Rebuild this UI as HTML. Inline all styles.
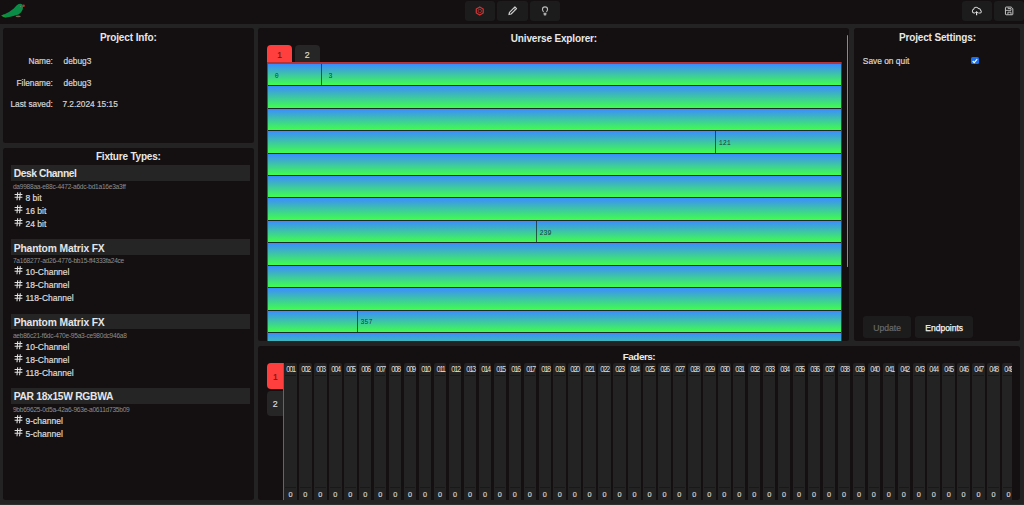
<!DOCTYPE html>
<html><head><meta charset="utf-8"><style>
html,body{margin:0;padding:0;width:1024px;height:505px;overflow:hidden;background:#141011;}
body{position:relative;font-family:'Liberation Sans', sans-serif;}
div,svg{position:absolute;}
.t{line-height:1;white-space:nowrap;}
</style></head><body>
<div style="left:0.00px;top:0.00px;width:1024.00px;height:23.80px;background:#141011;"></div>
<svg style="left:0;top:0" width="28" height="22" viewBox="0 0 28 22">
<path d="M1.3 15.3 L4 14.4 L9 12 L13.5 8.8 L16.5 5.6 L18.6 4 L20.8 3.7 L22.4 4.6 L23 6.5 L22.8 9.2 L21.2 12.2 L18.5 14.4 L15 15.6 L10.5 16.7 L6.2 17.6 L3.5 16.9 Z" fill="#0b8c46"/>
<path d="M1.3 15.3 L4.5 14.6 L6 17.4 L3.3 16.9 Z" fill="#139a2a"/>
<circle cx="23.6" cy="5.8" r="1.2" fill="#e02424"/>
<ellipse cx="18.2" cy="16.4" rx="2.6" ry="0.8" fill="#7a6656"/>
<circle cx="20.5" cy="6.4" r="0.5" fill="#6a8a7a"/>
</svg>
<div style="left:464.50px;top:1.10px;width:30.70px;height:19.90px;background:#1c1c1c;border-radius:3px;"></div>
<div style="left:497.00px;top:1.10px;width:30.60px;height:19.90px;background:#1c1c1c;border-radius:3px;"></div>
<div style="left:529.50px;top:1.10px;width:30.20px;height:19.90px;background:#1c1c1c;border-radius:3px;"></div>
<div style="left:961.50px;top:1.10px;width:30.20px;height:19.90px;background:#1c1c1c;border-radius:3px;"></div>
<div style="left:993.50px;top:1.10px;width:30.20px;height:19.90px;background:#1c1c1c;border-radius:3px;"></div>
<svg style="left:470px;top:1px" width="20" height="20" viewBox="0 0 20 20">
<path d="M9.75 6.00 L13.21 8.00 L13.21 12.00 L9.75 14.00 L6.29 12.00 L6.29 8.00 Z" fill="none" stroke="#cc3636" stroke-width="1.25" stroke-linejoin="round"/>
<circle cx="9.75" cy="10.0" r="1.75" fill="none" stroke="#a83030" stroke-width="0.9"/>
</svg>
<svg style="left:502px;top:1px" width="20" height="20" viewBox="0 0 20 20">
<path d="M6.94 13.56 L7.47 11.41 L12.91 5.96 L14.54 7.59 L9.09 13.03 Z" fill="none" stroke="#cfcfcf" stroke-width="1.15" stroke-linejoin="round"/>
<path d="M11.71 7.17 L13.33 8.79" stroke="#cfcfcf" stroke-width="0.9"/>
</svg>
<svg style="left:535px;top:1px" width="20" height="20" viewBox="0 0 20 20">
<path d="M8.6 10.9 Q7.45 9.8 7.45 8.35 A2.55 2.55 0 0 1 12.55 8.35 Q12.55 9.8 11.4 10.9" fill="none" stroke="#b8b8b8" stroke-width="1.15"/>
<path d="M8.45 11.8 L11.55 11.8 L11.2 14.3 Q10 14.8 8.8 14.3 Z" fill="#adadad"/>
</svg>
<svg style="left:966px;top:1px" width="22" height="20" viewBox="0 0 22 20">
<path d="M9.0 11.9 L8.1 11.9 A1.85 1.85 0 0 1 7.6 8.3 A2.6 2.6 0 0 1 12.4 7.6 A1.8 1.8 0 0 1 14.6 9.6 A1.2 1.2 0 0 1 14.2 11.9 L12.3 11.9" fill="none" stroke="#d0d0d0" stroke-width="1.05" stroke-linejoin="round"/>
<path d="M10.6 14.3 L10.6 11" stroke="#e6e6e6" stroke-width="1.2"/>
<path d="M8.9 12.0 L10.6 10.1 L12.3 12.0 Z" fill="#e6e6e6"/>
</svg>
<svg style="left:998px;top:1px" width="22" height="20" viewBox="0 0 22 20">
<path d="M8.2 6.05 L13.2 6.05 L14.85 7.7 L14.85 13.1 Q14.85 13.75 14.2 13.75 L8.1 13.75 Q7.45 13.75 7.45 13.1 L7.45 6.8 Q7.45 6.05 8.2 6.05 Z" fill="none" stroke="#cccccc" stroke-width="0.95" stroke-linejoin="round"/>
<path d="M10.1 6.5 L10.1 7.55 L13.0 7.55 L13.0 9.35 L7.6 9.35" fill="none" stroke="#c4c4c4" stroke-width="0.9"/>
<path d="M9.9 13.5 L9.9 11.2 L13.0 11.2 L13.0 13.5" fill="none" stroke="#c4c4c4" stroke-width="0.9"/>
</svg>
<div style="left:0.00px;top:23.80px;width:1024.00px;height:481.20px;background:#232323;"></div>
<div style="left:3.00px;top:28.00px;width:251.00px;height:114.50px;background:#141011;border-radius:2.5px;"></div>
<div style="left:3.00px;top:147.70px;width:251.00px;height:352.00px;background:#141011;border-radius:2.5px;"></div>
<div style="left:258.00px;top:28.00px;width:591.00px;height:313.30px;background:#141011;border-radius:2.5px;"></div>
<div style="left:854.00px;top:28.00px;width:166.00px;height:313.30px;background:#141011;border-radius:2.5px;"></div>
<div style="left:258.00px;top:345.90px;width:762.00px;height:154.00px;background:#141011;border-radius:2.5px;"></div>
<div style="left:0.00px;top:503.60px;width:1024.00px;height:1.40px;background:#2e2e2e;"></div>
<div class="t" style="left:28.30px;width:200px;text-align:center;top:33.13px;font-size:10px;color:#e8e8e8;font-weight:bold;font-family:'Liberation Sans', sans-serif;letter-spacing:-0.12px;">Project Info:</div>
<div class="t" style="left:-147.10px;width:200px;text-align:right;top:57.47px;font-size:8.3px;color:#d4d4d4;font-weight:normal;font-family:'Liberation Sans', sans-serif;-webkit-text-stroke:0.2px #d4d4d4;">Name:</div>
<div class="t" style="left:63.60px;top:57.47px;font-size:8.3px;color:#d4d4d4;font-weight:normal;font-family:'Liberation Sans', sans-serif;-webkit-text-stroke:0.2px #d4d4d4;">debug3</div>
<div class="t" style="left:-147.10px;width:200px;text-align:right;top:78.87px;font-size:8.3px;color:#d4d4d4;font-weight:normal;font-family:'Liberation Sans', sans-serif;-webkit-text-stroke:0.2px #d4d4d4;">Filename:</div>
<div class="t" style="left:63.60px;top:78.87px;font-size:8.3px;color:#d4d4d4;font-weight:normal;font-family:'Liberation Sans', sans-serif;-webkit-text-stroke:0.2px #d4d4d4;">debug3</div>
<div class="t" style="left:-147.10px;width:200px;text-align:right;top:99.77px;font-size:8.3px;color:#d4d4d4;font-weight:normal;font-family:'Liberation Sans', sans-serif;-webkit-text-stroke:0.2px #d4d4d4;">Last saved:</div>
<div class="t" style="left:62.40px;top:99.77px;font-size:8.3px;color:#d4d4d4;font-weight:normal;font-family:'Liberation Sans', sans-serif;-webkit-text-stroke:0.2px #d4d4d4;">7.2.2024 15:15</div>
<div class="t" style="left:28.30px;width:200px;text-align:center;top:151.53px;font-size:10px;color:#e8e8e8;font-weight:bold;font-family:'Liberation Sans', sans-serif;letter-spacing:-0.2px;">Fixture Types:</div>
<div style="left:11.10px;top:165.00px;width:238.90px;height:15.90px;background:#252525;"></div>
<div class="t" style="left:13.70px;top:169.28px;font-size:10.3px;color:#e6e6e6;font-weight:bold;font-family:'Liberation Sans', sans-serif;letter-spacing:-0.44px;">Desk Channel</div>
<div class="t" style="left:12.90px;top:183.91px;font-size:6.6px;color:#8e8e8e;font-weight:normal;font-family:'Liberation Sans', sans-serif;-webkit-text-stroke:0;letter-spacing:-0.25px;">da9988aa-e88c-4472-a6dc-bd1a16e3a3ff</div>
<svg style="left:13.5px;top:191.10px" width="9" height="10" viewBox="0 0 9 10"><path d="M0.6 3.5 H8.4 M0.6 6.3 H8.4 M3.7 1.2 L3.0 9.2 M6.3 1.2 L5.6 9.2" stroke="#e2e2e2" stroke-width="1.05" fill="none"/></svg>
<div class="t" style="left:25.50px;top:193.90px;font-size:8.5px;color:#dcdcdc;font-weight:normal;font-family:'Liberation Sans', sans-serif;-webkit-text-stroke:0.2px #dcdcdc;">8 bit</div>
<svg style="left:13.5px;top:204.20px" width="9" height="10" viewBox="0 0 9 10"><path d="M0.6 3.5 H8.4 M0.6 6.3 H8.4 M3.7 1.2 L3.0 9.2 M6.3 1.2 L5.6 9.2" stroke="#e2e2e2" stroke-width="1.05" fill="none"/></svg>
<div class="t" style="left:25.50px;top:207.00px;font-size:8.5px;color:#dcdcdc;font-weight:normal;font-family:'Liberation Sans', sans-serif;-webkit-text-stroke:0.2px #dcdcdc;">16 bit</div>
<svg style="left:13.5px;top:217.30px" width="9" height="10" viewBox="0 0 9 10"><path d="M0.6 3.5 H8.4 M0.6 6.3 H8.4 M3.7 1.2 L3.0 9.2 M6.3 1.2 L5.6 9.2" stroke="#e2e2e2" stroke-width="1.05" fill="none"/></svg>
<div class="t" style="left:25.50px;top:220.10px;font-size:8.5px;color:#dcdcdc;font-weight:normal;font-family:'Liberation Sans', sans-serif;-webkit-text-stroke:0.2px #dcdcdc;">24 bit</div>
<div style="left:11.10px;top:239.30px;width:238.90px;height:15.90px;background:#252525;"></div>
<div class="t" style="left:13.70px;top:243.58px;font-size:10.3px;color:#e6e6e6;font-weight:bold;font-family:'Liberation Sans', sans-serif;letter-spacing:-0.14px;">Phantom Matrix FX</div>
<div class="t" style="left:12.90px;top:258.21px;font-size:6.6px;color:#8e8e8e;font-weight:normal;font-family:'Liberation Sans', sans-serif;-webkit-text-stroke:0;letter-spacing:-0.25px;">7a168277-ad26-4776-bb15-ff4333fa24ce</div>
<svg style="left:13.5px;top:265.40px" width="9" height="10" viewBox="0 0 9 10"><path d="M0.6 3.5 H8.4 M0.6 6.3 H8.4 M3.7 1.2 L3.0 9.2 M6.3 1.2 L5.6 9.2" stroke="#e2e2e2" stroke-width="1.05" fill="none"/></svg>
<div class="t" style="left:25.50px;top:268.20px;font-size:8.5px;color:#dcdcdc;font-weight:normal;font-family:'Liberation Sans', sans-serif;-webkit-text-stroke:0.2px #dcdcdc;">10-Channel</div>
<svg style="left:13.5px;top:278.50px" width="9" height="10" viewBox="0 0 9 10"><path d="M0.6 3.5 H8.4 M0.6 6.3 H8.4 M3.7 1.2 L3.0 9.2 M6.3 1.2 L5.6 9.2" stroke="#e2e2e2" stroke-width="1.05" fill="none"/></svg>
<div class="t" style="left:25.50px;top:281.30px;font-size:8.5px;color:#dcdcdc;font-weight:normal;font-family:'Liberation Sans', sans-serif;-webkit-text-stroke:0.2px #dcdcdc;">18-Channel</div>
<svg style="left:13.5px;top:291.60px" width="9" height="10" viewBox="0 0 9 10"><path d="M0.6 3.5 H8.4 M0.6 6.3 H8.4 M3.7 1.2 L3.0 9.2 M6.3 1.2 L5.6 9.2" stroke="#e2e2e2" stroke-width="1.05" fill="none"/></svg>
<div class="t" style="left:25.50px;top:294.40px;font-size:8.5px;color:#dcdcdc;font-weight:normal;font-family:'Liberation Sans', sans-serif;-webkit-text-stroke:0.2px #dcdcdc;">118-Channel</div>
<div style="left:11.10px;top:313.60px;width:238.90px;height:15.90px;background:#252525;"></div>
<div class="t" style="left:13.70px;top:317.88px;font-size:10.3px;color:#e6e6e6;font-weight:bold;font-family:'Liberation Sans', sans-serif;letter-spacing:-0.14px;">Phantom Matrix FX</div>
<div class="t" style="left:12.90px;top:332.51px;font-size:6.6px;color:#8e8e8e;font-weight:normal;font-family:'Liberation Sans', sans-serif;-webkit-text-stroke:0;letter-spacing:-0.25px;">aeb86c21-f6dc-470e-95a3-ce980dc946a8</div>
<svg style="left:13.5px;top:339.70px" width="9" height="10" viewBox="0 0 9 10"><path d="M0.6 3.5 H8.4 M0.6 6.3 H8.4 M3.7 1.2 L3.0 9.2 M6.3 1.2 L5.6 9.2" stroke="#e2e2e2" stroke-width="1.05" fill="none"/></svg>
<div class="t" style="left:25.50px;top:342.50px;font-size:8.5px;color:#dcdcdc;font-weight:normal;font-family:'Liberation Sans', sans-serif;-webkit-text-stroke:0.2px #dcdcdc;">10-Channel</div>
<svg style="left:13.5px;top:352.80px" width="9" height="10" viewBox="0 0 9 10"><path d="M0.6 3.5 H8.4 M0.6 6.3 H8.4 M3.7 1.2 L3.0 9.2 M6.3 1.2 L5.6 9.2" stroke="#e2e2e2" stroke-width="1.05" fill="none"/></svg>
<div class="t" style="left:25.50px;top:355.60px;font-size:8.5px;color:#dcdcdc;font-weight:normal;font-family:'Liberation Sans', sans-serif;-webkit-text-stroke:0.2px #dcdcdc;">18-Channel</div>
<svg style="left:13.5px;top:365.90px" width="9" height="10" viewBox="0 0 9 10"><path d="M0.6 3.5 H8.4 M0.6 6.3 H8.4 M3.7 1.2 L3.0 9.2 M6.3 1.2 L5.6 9.2" stroke="#e2e2e2" stroke-width="1.05" fill="none"/></svg>
<div class="t" style="left:25.50px;top:368.70px;font-size:8.5px;color:#dcdcdc;font-weight:normal;font-family:'Liberation Sans', sans-serif;-webkit-text-stroke:0.2px #dcdcdc;">118-Channel</div>
<div style="left:11.10px;top:387.90px;width:238.90px;height:15.90px;background:#252525;"></div>
<div class="t" style="left:13.70px;top:392.18px;font-size:10.3px;color:#e6e6e6;font-weight:bold;font-family:'Liberation Sans', sans-serif;letter-spacing:-0.32px;">PAR 18x15W RGBWA</div>
<div class="t" style="left:12.90px;top:406.81px;font-size:6.6px;color:#8e8e8e;font-weight:normal;font-family:'Liberation Sans', sans-serif;-webkit-text-stroke:0;letter-spacing:-0.25px;">9bb69625-0d5a-42a6-963e-a0611d735b09</div>
<svg style="left:13.5px;top:414.00px" width="9" height="10" viewBox="0 0 9 10"><path d="M0.6 3.5 H8.4 M0.6 6.3 H8.4 M3.7 1.2 L3.0 9.2 M6.3 1.2 L5.6 9.2" stroke="#e2e2e2" stroke-width="1.05" fill="none"/></svg>
<div class="t" style="left:25.50px;top:416.80px;font-size:8.5px;color:#dcdcdc;font-weight:normal;font-family:'Liberation Sans', sans-serif;-webkit-text-stroke:0.2px #dcdcdc;">9-channel</div>
<svg style="left:13.5px;top:427.10px" width="9" height="10" viewBox="0 0 9 10"><path d="M0.6 3.5 H8.4 M0.6 6.3 H8.4 M3.7 1.2 L3.0 9.2 M6.3 1.2 L5.6 9.2" stroke="#e2e2e2" stroke-width="1.05" fill="none"/></svg>
<div class="t" style="left:25.50px;top:429.90px;font-size:8.5px;color:#dcdcdc;font-weight:normal;font-family:'Liberation Sans', sans-serif;-webkit-text-stroke:0.2px #dcdcdc;">5-channel</div>
<div class="t" style="left:453.90px;width:200px;text-align:center;top:33.53px;font-size:10px;color:#e8e8e8;font-weight:bold;font-family:'Liberation Sans', sans-serif;letter-spacing:-0.15px;">Universe Explorer:</div>
<div style="left:267.00px;top:45.40px;width:25.10px;height:17.50px;background:#ff3e3e;border-radius:4px 4px 0 0;"></div>
<div class="t" style="left:179.60px;width:200px;text-align:center;top:51.17px;font-size:8.3px;color:#6a1a1a;font-weight:normal;font-family:'Liberation Sans', sans-serif;-webkit-text-stroke:0.2px #6a1a1a;">1</div>
<div style="left:294.50px;top:45.40px;width:25.40px;height:17.50px;background:#262626;border-radius:4px 4px 0 0;"></div>
<div class="t" style="left:207.30px;width:200px;text-align:center;top:50.75px;font-size:8.8px;color:#dadada;font-weight:normal;font-family:'Liberation Sans', sans-serif;-webkit-text-stroke:0.2px #dadada;">2</div>
<div style="left:266.6px;top:62.2px;width:575px;height:279.2px;overflow:hidden;">
<div style="left:0;top:0;width:575px;height:1.7px;background:#b83434"></div>
<div style="left:0;top:0;width:1.2px;height:300px;background:#a83030"></div>
<div style="left:574px;top:0;width:1px;height:300px;background:#7a2a2a"></div>
<div style="left:1.30px;top:1.70px;width:573.28px;height:21.43px;background:linear-gradient(#3b8cff,#40ff4c)"></div>
<div style="left:1.30px;top:23.13px;width:573.28px;height:1.0px;background:#1f2a2a"></div>
<div class="t" style="left:-18.70px;width:57.91px;text-align:center;top:10.57px;font-family:'Liberation Mono', monospace;font-size:6.7px;color:rgba(15,35,35,0.85)">0</div>
<div style="left:54.44px;top:1.70px;width:1.2px;height:21.43px;background:rgba(20,35,35,0.7)"></div>
<div class="t" style="left:35.04px;width:57.91px;text-align:center;top:10.57px;font-family:'Liberation Mono', monospace;font-size:6.7px;color:rgba(15,35,35,0.85)">3</div>
<div style="left:1.30px;top:24.13px;width:573.28px;height:21.43px;background:linear-gradient(#3b8cff,#40ff4c)"></div>
<div style="left:1.30px;top:45.56px;width:573.28px;height:1.0px;background:#1f2a2a"></div>
<div style="left:1.30px;top:46.56px;width:573.28px;height:21.43px;background:linear-gradient(#3b8cff,#40ff4c)"></div>
<div style="left:1.30px;top:67.99px;width:573.28px;height:1.0px;background:#1f2a2a"></div>
<div style="left:1.30px;top:68.99px;width:573.28px;height:21.43px;background:linear-gradient(#3b8cff,#40ff4c)"></div>
<div style="left:1.30px;top:90.42px;width:573.28px;height:1.0px;background:#1f2a2a"></div>
<div style="left:448.57px;top:68.99px;width:1.2px;height:21.43px;background:rgba(20,35,35,0.7)"></div>
<div class="t" style="left:429.17px;width:57.91px;text-align:center;top:77.86px;font-family:'Liberation Mono', monospace;font-size:6.7px;color:rgba(15,35,35,0.85)">121</div>
<div style="left:1.30px;top:91.42px;width:573.28px;height:21.43px;background:linear-gradient(#3b8cff,#40ff4c)"></div>
<div style="left:1.30px;top:112.85px;width:573.28px;height:1.0px;background:#1f2a2a"></div>
<div style="left:1.30px;top:113.85px;width:573.28px;height:21.43px;background:linear-gradient(#3b8cff,#40ff4c)"></div>
<div style="left:1.30px;top:135.28px;width:573.28px;height:1.0px;background:#1f2a2a"></div>
<div style="left:1.30px;top:136.28px;width:573.28px;height:21.43px;background:linear-gradient(#3b8cff,#40ff4c)"></div>
<div style="left:1.30px;top:157.71px;width:573.28px;height:1.0px;background:#1f2a2a"></div>
<div style="left:1.30px;top:158.71px;width:573.28px;height:21.43px;background:linear-gradient(#3b8cff,#40ff4c)"></div>
<div style="left:1.30px;top:180.14px;width:573.28px;height:1.0px;background:#1f2a2a"></div>
<div style="left:269.42px;top:158.71px;width:1.2px;height:21.43px;background:rgba(20,35,35,0.7)"></div>
<div class="t" style="left:250.02px;width:57.91px;text-align:center;top:167.58px;font-family:'Liberation Mono', monospace;font-size:6.7px;color:rgba(15,35,35,0.85)">239</div>
<div style="left:1.30px;top:181.14px;width:573.28px;height:21.43px;background:linear-gradient(#3b8cff,#40ff4c)"></div>
<div style="left:1.30px;top:202.57px;width:573.28px;height:1.0px;background:#1f2a2a"></div>
<div style="left:1.30px;top:203.57px;width:573.28px;height:21.43px;background:linear-gradient(#3b8cff,#40ff4c)"></div>
<div style="left:1.30px;top:225.00px;width:573.28px;height:1.0px;background:#1f2a2a"></div>
<div style="left:1.30px;top:226.00px;width:573.28px;height:21.43px;background:linear-gradient(#3b8cff,#40ff4c)"></div>
<div style="left:1.30px;top:247.43px;width:573.28px;height:1.0px;background:#1f2a2a"></div>
<div style="left:1.30px;top:248.43px;width:573.28px;height:21.43px;background:linear-gradient(#3b8cff,#40ff4c)"></div>
<div style="left:1.30px;top:269.86px;width:573.28px;height:1.0px;background:#1f2a2a"></div>
<div style="left:90.27px;top:248.43px;width:1.2px;height:21.43px;background:rgba(20,35,35,0.7)"></div>
<div class="t" style="left:70.87px;width:57.91px;text-align:center;top:257.30px;font-family:'Liberation Mono', monospace;font-size:6.7px;color:rgba(15,35,35,0.85)">357</div>
<div style="left:1.30px;top:270.86px;width:573.28px;height:21.43px;background:linear-gradient(#3b8cff,#40ff4c)"></div>
<div style="left:1.30px;top:292.29px;width:573.28px;height:1.0px;background:#1f2a2a"></div>
</div>
<div style="left:846.90px;top:34.70px;width:1.40px;height:232.50px;background:#8a8a8a;border-radius:1px;"></div>
<div class="t" style="left:837.40px;width:200px;text-align:center;top:33.33px;font-size:10px;color:#e8e8e8;font-weight:bold;font-family:'Liberation Sans', sans-serif;letter-spacing:-0.15px;">Project Settings:</div>
<div class="t" style="left:862.80px;top:56.79px;font-size:8.4px;color:#d8d8d8;font-weight:normal;font-family:'Liberation Sans', sans-serif;-webkit-text-stroke:0.2px #d8d8d8;">Save on quit</div>
<div style="left:971.2px;top:56.7px;width:7.6px;height:7.6px;background:#1a6ef0;border-radius:1.5px"></div>
<svg style="left:971.2px;top:56.7px" width="8" height="8" viewBox="0 0 8 8"><path d="M1.7 4 L3.2 5.6 L6.2 2.2" fill="none" stroke="#fff" stroke-width="1.2"/></svg>
<div style="left:862.70px;top:316.10px;width:48.80px;height:21.60px;background:#1c1c1c;border-radius:3px;"></div>
<div class="t" style="left:787.10px;width:200px;text-align:center;top:323.82px;font-size:8.6px;color:#6a6a6a;font-weight:normal;font-family:'Liberation Sans', sans-serif;-webkit-text-stroke:0.2px #6a6a6a;">Update</div>
<div style="left:914.90px;top:316.10px;width:58.60px;height:21.60px;background:#1c1c1c;border-radius:3px;"></div>
<div class="t" style="left:844.20px;width:200px;text-align:center;top:323.90px;font-size:8.5px;color:#f4f4f4;font-weight:normal;font-family:'Liberation Sans', sans-serif;-webkit-text-stroke:0.25px #f4f4f4;">Endpoints</div>
<div class="t" style="left:539.20px;width:200px;text-align:center;top:351.92px;font-size:9.9px;color:#ececec;font-weight:bold;font-family:'Liberation Sans', sans-serif;letter-spacing:-0.48px;text-indent:-0.48px;">Faders:</div>
<div style="left:266.80px;top:363.00px;width:17.40px;height:25.80px;background:#ff3e3e;border-radius:4px 0 0 4px;"></div>
<div class="t" style="left:175.30px;width:200px;text-align:center;top:373.27px;font-size:8.3px;color:#6a1a1a;font-weight:normal;font-family:'Liberation Sans', sans-serif;-webkit-text-stroke:0.2px #6a1a1a;">1</div>
<div style="left:266.80px;top:390.70px;width:16.40px;height:25.30px;background:#262626;border-radius:4px 0 0 4px;"></div>
<div class="t" style="left:175.30px;width:200px;text-align:center;top:399.75px;font-size:8.8px;color:#dadada;font-weight:normal;font-family:'Liberation Sans', sans-serif;-webkit-text-stroke:0.2px #dadada;">2</div>
<div style="left:282.90px;top:363.00px;width:1.30px;height:137.00px;background:#d83434;"></div>
<div style="left:284.2px;top:362.7px;width:727.9px;height:137.3px;overflow:hidden;">
<div style="left:0.00px;top:0;width:12.5px;height:137.3px;background:#232323;border-radius:2px 2px 0 0"></div>
<div style="left:1.00px;top:12.5px;width:10.5px;height:0.9px;background:#191919"></div>
<div style="left:1.00px;top:124.5px;width:10.5px;height:0.9px;background:#191919"></div>
<div class="t" style="left:-10.00px;width:32.5px;text-align:center;top:2.02px;font-size:8.6px;letter-spacing:-1.45px;text-indent:0.75px;color:#dcdcdc;transform:scaleX(0.86)">001</div>
<div class="t" style="left:-10.00px;width:32.5px;text-align:center;top:128.12px;font-size:7.3px;color:#d0d0d0;-webkit-text-stroke:0.2px #d0d0d0">0</div>
<div style="left:14.96px;top:0;width:12.5px;height:137.3px;background:#232323;border-radius:2px 2px 0 0"></div>
<div style="left:15.96px;top:12.5px;width:10.5px;height:0.9px;background:#191919"></div>
<div style="left:15.96px;top:124.5px;width:10.5px;height:0.9px;background:#191919"></div>
<div class="t" style="left:4.96px;width:32.5px;text-align:center;top:2.02px;font-size:8.6px;letter-spacing:-1.45px;text-indent:0.75px;color:#dcdcdc;transform:scaleX(0.86)">002</div>
<div class="t" style="left:4.96px;width:32.5px;text-align:center;top:128.12px;font-size:7.3px;color:#d0d0d0;-webkit-text-stroke:0.2px #d0d0d0">0</div>
<div style="left:29.92px;top:0;width:12.5px;height:137.3px;background:#232323;border-radius:2px 2px 0 0"></div>
<div style="left:30.92px;top:12.5px;width:10.5px;height:0.9px;background:#191919"></div>
<div style="left:30.92px;top:124.5px;width:10.5px;height:0.9px;background:#191919"></div>
<div class="t" style="left:19.92px;width:32.5px;text-align:center;top:2.02px;font-size:8.6px;letter-spacing:-1.45px;text-indent:0.75px;color:#dcdcdc;transform:scaleX(0.86)">003</div>
<div class="t" style="left:19.92px;width:32.5px;text-align:center;top:128.12px;font-size:7.3px;color:#d0d0d0;-webkit-text-stroke:0.2px #d0d0d0">0</div>
<div style="left:44.88px;top:0;width:12.5px;height:137.3px;background:#232323;border-radius:2px 2px 0 0"></div>
<div style="left:45.88px;top:12.5px;width:10.5px;height:0.9px;background:#191919"></div>
<div style="left:45.88px;top:124.5px;width:10.5px;height:0.9px;background:#191919"></div>
<div class="t" style="left:34.88px;width:32.5px;text-align:center;top:2.02px;font-size:8.6px;letter-spacing:-1.45px;text-indent:0.75px;color:#dcdcdc;transform:scaleX(0.86)">004</div>
<div class="t" style="left:34.88px;width:32.5px;text-align:center;top:128.12px;font-size:7.3px;color:#d0d0d0;-webkit-text-stroke:0.2px #d0d0d0">0</div>
<div style="left:59.84px;top:0;width:12.5px;height:137.3px;background:#232323;border-radius:2px 2px 0 0"></div>
<div style="left:60.84px;top:12.5px;width:10.5px;height:0.9px;background:#191919"></div>
<div style="left:60.84px;top:124.5px;width:10.5px;height:0.9px;background:#191919"></div>
<div class="t" style="left:49.84px;width:32.5px;text-align:center;top:2.02px;font-size:8.6px;letter-spacing:-1.45px;text-indent:0.75px;color:#dcdcdc;transform:scaleX(0.86)">005</div>
<div class="t" style="left:49.84px;width:32.5px;text-align:center;top:128.12px;font-size:7.3px;color:#d0d0d0;-webkit-text-stroke:0.2px #d0d0d0">0</div>
<div style="left:74.80px;top:0;width:12.5px;height:137.3px;background:#232323;border-radius:2px 2px 0 0"></div>
<div style="left:75.80px;top:12.5px;width:10.5px;height:0.9px;background:#191919"></div>
<div style="left:75.80px;top:124.5px;width:10.5px;height:0.9px;background:#191919"></div>
<div class="t" style="left:64.80px;width:32.5px;text-align:center;top:2.02px;font-size:8.6px;letter-spacing:-1.45px;text-indent:0.75px;color:#dcdcdc;transform:scaleX(0.86)">006</div>
<div class="t" style="left:64.80px;width:32.5px;text-align:center;top:128.12px;font-size:7.3px;color:#d0d0d0;-webkit-text-stroke:0.2px #d0d0d0">0</div>
<div style="left:89.76px;top:0;width:12.5px;height:137.3px;background:#232323;border-radius:2px 2px 0 0"></div>
<div style="left:90.76px;top:12.5px;width:10.5px;height:0.9px;background:#191919"></div>
<div style="left:90.76px;top:124.5px;width:10.5px;height:0.9px;background:#191919"></div>
<div class="t" style="left:79.76px;width:32.5px;text-align:center;top:2.02px;font-size:8.6px;letter-spacing:-1.45px;text-indent:0.75px;color:#dcdcdc;transform:scaleX(0.86)">007</div>
<div class="t" style="left:79.76px;width:32.5px;text-align:center;top:128.12px;font-size:7.3px;color:#d0d0d0;-webkit-text-stroke:0.2px #d0d0d0">0</div>
<div style="left:104.72px;top:0;width:12.5px;height:137.3px;background:#232323;border-radius:2px 2px 0 0"></div>
<div style="left:105.72px;top:12.5px;width:10.5px;height:0.9px;background:#191919"></div>
<div style="left:105.72px;top:124.5px;width:10.5px;height:0.9px;background:#191919"></div>
<div class="t" style="left:94.72px;width:32.5px;text-align:center;top:2.02px;font-size:8.6px;letter-spacing:-1.45px;text-indent:0.75px;color:#dcdcdc;transform:scaleX(0.86)">008</div>
<div class="t" style="left:94.72px;width:32.5px;text-align:center;top:128.12px;font-size:7.3px;color:#d0d0d0;-webkit-text-stroke:0.2px #d0d0d0">0</div>
<div style="left:119.68px;top:0;width:12.5px;height:137.3px;background:#232323;border-radius:2px 2px 0 0"></div>
<div style="left:120.68px;top:12.5px;width:10.5px;height:0.9px;background:#191919"></div>
<div style="left:120.68px;top:124.5px;width:10.5px;height:0.9px;background:#191919"></div>
<div class="t" style="left:109.68px;width:32.5px;text-align:center;top:2.02px;font-size:8.6px;letter-spacing:-1.45px;text-indent:0.75px;color:#dcdcdc;transform:scaleX(0.86)">009</div>
<div class="t" style="left:109.68px;width:32.5px;text-align:center;top:128.12px;font-size:7.3px;color:#d0d0d0;-webkit-text-stroke:0.2px #d0d0d0">0</div>
<div style="left:134.64px;top:0;width:12.5px;height:137.3px;background:#232323;border-radius:2px 2px 0 0"></div>
<div style="left:135.64px;top:12.5px;width:10.5px;height:0.9px;background:#191919"></div>
<div style="left:135.64px;top:124.5px;width:10.5px;height:0.9px;background:#191919"></div>
<div class="t" style="left:124.64px;width:32.5px;text-align:center;top:2.02px;font-size:8.6px;letter-spacing:-1.45px;text-indent:0.75px;color:#dcdcdc;transform:scaleX(0.86)">010</div>
<div class="t" style="left:124.64px;width:32.5px;text-align:center;top:128.12px;font-size:7.3px;color:#d0d0d0;-webkit-text-stroke:0.2px #d0d0d0">0</div>
<div style="left:149.60px;top:0;width:12.5px;height:137.3px;background:#232323;border-radius:2px 2px 0 0"></div>
<div style="left:150.60px;top:12.5px;width:10.5px;height:0.9px;background:#191919"></div>
<div style="left:150.60px;top:124.5px;width:10.5px;height:0.9px;background:#191919"></div>
<div class="t" style="left:139.60px;width:32.5px;text-align:center;top:2.02px;font-size:8.6px;letter-spacing:-1.45px;text-indent:0.75px;color:#dcdcdc;transform:scaleX(0.86)">011</div>
<div class="t" style="left:139.60px;width:32.5px;text-align:center;top:128.12px;font-size:7.3px;color:#d0d0d0;-webkit-text-stroke:0.2px #d0d0d0">0</div>
<div style="left:164.56px;top:0;width:12.5px;height:137.3px;background:#232323;border-radius:2px 2px 0 0"></div>
<div style="left:165.56px;top:12.5px;width:10.5px;height:0.9px;background:#191919"></div>
<div style="left:165.56px;top:124.5px;width:10.5px;height:0.9px;background:#191919"></div>
<div class="t" style="left:154.56px;width:32.5px;text-align:center;top:2.02px;font-size:8.6px;letter-spacing:-1.45px;text-indent:0.75px;color:#dcdcdc;transform:scaleX(0.86)">012</div>
<div class="t" style="left:154.56px;width:32.5px;text-align:center;top:128.12px;font-size:7.3px;color:#d0d0d0;-webkit-text-stroke:0.2px #d0d0d0">0</div>
<div style="left:179.52px;top:0;width:12.5px;height:137.3px;background:#232323;border-radius:2px 2px 0 0"></div>
<div style="left:180.52px;top:12.5px;width:10.5px;height:0.9px;background:#191919"></div>
<div style="left:180.52px;top:124.5px;width:10.5px;height:0.9px;background:#191919"></div>
<div class="t" style="left:169.52px;width:32.5px;text-align:center;top:2.02px;font-size:8.6px;letter-spacing:-1.45px;text-indent:0.75px;color:#dcdcdc;transform:scaleX(0.86)">013</div>
<div class="t" style="left:169.52px;width:32.5px;text-align:center;top:128.12px;font-size:7.3px;color:#d0d0d0;-webkit-text-stroke:0.2px #d0d0d0">0</div>
<div style="left:194.48px;top:0;width:12.5px;height:137.3px;background:#232323;border-radius:2px 2px 0 0"></div>
<div style="left:195.48px;top:12.5px;width:10.5px;height:0.9px;background:#191919"></div>
<div style="left:195.48px;top:124.5px;width:10.5px;height:0.9px;background:#191919"></div>
<div class="t" style="left:184.48px;width:32.5px;text-align:center;top:2.02px;font-size:8.6px;letter-spacing:-1.45px;text-indent:0.75px;color:#dcdcdc;transform:scaleX(0.86)">014</div>
<div class="t" style="left:184.48px;width:32.5px;text-align:center;top:128.12px;font-size:7.3px;color:#d0d0d0;-webkit-text-stroke:0.2px #d0d0d0">0</div>
<div style="left:209.44px;top:0;width:12.5px;height:137.3px;background:#232323;border-radius:2px 2px 0 0"></div>
<div style="left:210.44px;top:12.5px;width:10.5px;height:0.9px;background:#191919"></div>
<div style="left:210.44px;top:124.5px;width:10.5px;height:0.9px;background:#191919"></div>
<div class="t" style="left:199.44px;width:32.5px;text-align:center;top:2.02px;font-size:8.6px;letter-spacing:-1.45px;text-indent:0.75px;color:#dcdcdc;transform:scaleX(0.86)">015</div>
<div class="t" style="left:199.44px;width:32.5px;text-align:center;top:128.12px;font-size:7.3px;color:#d0d0d0;-webkit-text-stroke:0.2px #d0d0d0">0</div>
<div style="left:224.40px;top:0;width:12.5px;height:137.3px;background:#232323;border-radius:2px 2px 0 0"></div>
<div style="left:225.40px;top:12.5px;width:10.5px;height:0.9px;background:#191919"></div>
<div style="left:225.40px;top:124.5px;width:10.5px;height:0.9px;background:#191919"></div>
<div class="t" style="left:214.40px;width:32.5px;text-align:center;top:2.02px;font-size:8.6px;letter-spacing:-1.45px;text-indent:0.75px;color:#dcdcdc;transform:scaleX(0.86)">016</div>
<div class="t" style="left:214.40px;width:32.5px;text-align:center;top:128.12px;font-size:7.3px;color:#d0d0d0;-webkit-text-stroke:0.2px #d0d0d0">0</div>
<div style="left:239.36px;top:0;width:12.5px;height:137.3px;background:#232323;border-radius:2px 2px 0 0"></div>
<div style="left:240.36px;top:12.5px;width:10.5px;height:0.9px;background:#191919"></div>
<div style="left:240.36px;top:124.5px;width:10.5px;height:0.9px;background:#191919"></div>
<div class="t" style="left:229.36px;width:32.5px;text-align:center;top:2.02px;font-size:8.6px;letter-spacing:-1.45px;text-indent:0.75px;color:#dcdcdc;transform:scaleX(0.86)">017</div>
<div class="t" style="left:229.36px;width:32.5px;text-align:center;top:128.12px;font-size:7.3px;color:#d0d0d0;-webkit-text-stroke:0.2px #d0d0d0">0</div>
<div style="left:254.32px;top:0;width:12.5px;height:137.3px;background:#232323;border-radius:2px 2px 0 0"></div>
<div style="left:255.32px;top:12.5px;width:10.5px;height:0.9px;background:#191919"></div>
<div style="left:255.32px;top:124.5px;width:10.5px;height:0.9px;background:#191919"></div>
<div class="t" style="left:244.32px;width:32.5px;text-align:center;top:2.02px;font-size:8.6px;letter-spacing:-1.45px;text-indent:0.75px;color:#dcdcdc;transform:scaleX(0.86)">018</div>
<div class="t" style="left:244.32px;width:32.5px;text-align:center;top:128.12px;font-size:7.3px;color:#d0d0d0;-webkit-text-stroke:0.2px #d0d0d0">0</div>
<div style="left:269.28px;top:0;width:12.5px;height:137.3px;background:#232323;border-radius:2px 2px 0 0"></div>
<div style="left:270.28px;top:12.5px;width:10.5px;height:0.9px;background:#191919"></div>
<div style="left:270.28px;top:124.5px;width:10.5px;height:0.9px;background:#191919"></div>
<div class="t" style="left:259.28px;width:32.5px;text-align:center;top:2.02px;font-size:8.6px;letter-spacing:-1.45px;text-indent:0.75px;color:#dcdcdc;transform:scaleX(0.86)">019</div>
<div class="t" style="left:259.28px;width:32.5px;text-align:center;top:128.12px;font-size:7.3px;color:#d0d0d0;-webkit-text-stroke:0.2px #d0d0d0">0</div>
<div style="left:284.24px;top:0;width:12.5px;height:137.3px;background:#232323;border-radius:2px 2px 0 0"></div>
<div style="left:285.24px;top:12.5px;width:10.5px;height:0.9px;background:#191919"></div>
<div style="left:285.24px;top:124.5px;width:10.5px;height:0.9px;background:#191919"></div>
<div class="t" style="left:274.24px;width:32.5px;text-align:center;top:2.02px;font-size:8.6px;letter-spacing:-1.45px;text-indent:0.75px;color:#dcdcdc;transform:scaleX(0.86)">020</div>
<div class="t" style="left:274.24px;width:32.5px;text-align:center;top:128.12px;font-size:7.3px;color:#d0d0d0;-webkit-text-stroke:0.2px #d0d0d0">0</div>
<div style="left:299.20px;top:0;width:12.5px;height:137.3px;background:#232323;border-radius:2px 2px 0 0"></div>
<div style="left:300.20px;top:12.5px;width:10.5px;height:0.9px;background:#191919"></div>
<div style="left:300.20px;top:124.5px;width:10.5px;height:0.9px;background:#191919"></div>
<div class="t" style="left:289.20px;width:32.5px;text-align:center;top:2.02px;font-size:8.6px;letter-spacing:-1.45px;text-indent:0.75px;color:#dcdcdc;transform:scaleX(0.86)">021</div>
<div class="t" style="left:289.20px;width:32.5px;text-align:center;top:128.12px;font-size:7.3px;color:#d0d0d0;-webkit-text-stroke:0.2px #d0d0d0">0</div>
<div style="left:314.16px;top:0;width:12.5px;height:137.3px;background:#232323;border-radius:2px 2px 0 0"></div>
<div style="left:315.16px;top:12.5px;width:10.5px;height:0.9px;background:#191919"></div>
<div style="left:315.16px;top:124.5px;width:10.5px;height:0.9px;background:#191919"></div>
<div class="t" style="left:304.16px;width:32.5px;text-align:center;top:2.02px;font-size:8.6px;letter-spacing:-1.45px;text-indent:0.75px;color:#dcdcdc;transform:scaleX(0.86)">022</div>
<div class="t" style="left:304.16px;width:32.5px;text-align:center;top:128.12px;font-size:7.3px;color:#d0d0d0;-webkit-text-stroke:0.2px #d0d0d0">0</div>
<div style="left:329.12px;top:0;width:12.5px;height:137.3px;background:#232323;border-radius:2px 2px 0 0"></div>
<div style="left:330.12px;top:12.5px;width:10.5px;height:0.9px;background:#191919"></div>
<div style="left:330.12px;top:124.5px;width:10.5px;height:0.9px;background:#191919"></div>
<div class="t" style="left:319.12px;width:32.5px;text-align:center;top:2.02px;font-size:8.6px;letter-spacing:-1.45px;text-indent:0.75px;color:#dcdcdc;transform:scaleX(0.86)">023</div>
<div class="t" style="left:319.12px;width:32.5px;text-align:center;top:128.12px;font-size:7.3px;color:#d0d0d0;-webkit-text-stroke:0.2px #d0d0d0">0</div>
<div style="left:344.08px;top:0;width:12.5px;height:137.3px;background:#232323;border-radius:2px 2px 0 0"></div>
<div style="left:345.08px;top:12.5px;width:10.5px;height:0.9px;background:#191919"></div>
<div style="left:345.08px;top:124.5px;width:10.5px;height:0.9px;background:#191919"></div>
<div class="t" style="left:334.08px;width:32.5px;text-align:center;top:2.02px;font-size:8.6px;letter-spacing:-1.45px;text-indent:0.75px;color:#dcdcdc;transform:scaleX(0.86)">024</div>
<div class="t" style="left:334.08px;width:32.5px;text-align:center;top:128.12px;font-size:7.3px;color:#d0d0d0;-webkit-text-stroke:0.2px #d0d0d0">0</div>
<div style="left:359.04px;top:0;width:12.5px;height:137.3px;background:#232323;border-radius:2px 2px 0 0"></div>
<div style="left:360.04px;top:12.5px;width:10.5px;height:0.9px;background:#191919"></div>
<div style="left:360.04px;top:124.5px;width:10.5px;height:0.9px;background:#191919"></div>
<div class="t" style="left:349.04px;width:32.5px;text-align:center;top:2.02px;font-size:8.6px;letter-spacing:-1.45px;text-indent:0.75px;color:#dcdcdc;transform:scaleX(0.86)">025</div>
<div class="t" style="left:349.04px;width:32.5px;text-align:center;top:128.12px;font-size:7.3px;color:#d0d0d0;-webkit-text-stroke:0.2px #d0d0d0">0</div>
<div style="left:374.00px;top:0;width:12.5px;height:137.3px;background:#232323;border-radius:2px 2px 0 0"></div>
<div style="left:375.00px;top:12.5px;width:10.5px;height:0.9px;background:#191919"></div>
<div style="left:375.00px;top:124.5px;width:10.5px;height:0.9px;background:#191919"></div>
<div class="t" style="left:364.00px;width:32.5px;text-align:center;top:2.02px;font-size:8.6px;letter-spacing:-1.45px;text-indent:0.75px;color:#dcdcdc;transform:scaleX(0.86)">026</div>
<div class="t" style="left:364.00px;width:32.5px;text-align:center;top:128.12px;font-size:7.3px;color:#d0d0d0;-webkit-text-stroke:0.2px #d0d0d0">0</div>
<div style="left:388.96px;top:0;width:12.5px;height:137.3px;background:#232323;border-radius:2px 2px 0 0"></div>
<div style="left:389.96px;top:12.5px;width:10.5px;height:0.9px;background:#191919"></div>
<div style="left:389.96px;top:124.5px;width:10.5px;height:0.9px;background:#191919"></div>
<div class="t" style="left:378.96px;width:32.5px;text-align:center;top:2.02px;font-size:8.6px;letter-spacing:-1.45px;text-indent:0.75px;color:#dcdcdc;transform:scaleX(0.86)">027</div>
<div class="t" style="left:378.96px;width:32.5px;text-align:center;top:128.12px;font-size:7.3px;color:#d0d0d0;-webkit-text-stroke:0.2px #d0d0d0">0</div>
<div style="left:403.92px;top:0;width:12.5px;height:137.3px;background:#232323;border-radius:2px 2px 0 0"></div>
<div style="left:404.92px;top:12.5px;width:10.5px;height:0.9px;background:#191919"></div>
<div style="left:404.92px;top:124.5px;width:10.5px;height:0.9px;background:#191919"></div>
<div class="t" style="left:393.92px;width:32.5px;text-align:center;top:2.02px;font-size:8.6px;letter-spacing:-1.45px;text-indent:0.75px;color:#dcdcdc;transform:scaleX(0.86)">028</div>
<div class="t" style="left:393.92px;width:32.5px;text-align:center;top:128.12px;font-size:7.3px;color:#d0d0d0;-webkit-text-stroke:0.2px #d0d0d0">0</div>
<div style="left:418.88px;top:0;width:12.5px;height:137.3px;background:#232323;border-radius:2px 2px 0 0"></div>
<div style="left:419.88px;top:12.5px;width:10.5px;height:0.9px;background:#191919"></div>
<div style="left:419.88px;top:124.5px;width:10.5px;height:0.9px;background:#191919"></div>
<div class="t" style="left:408.88px;width:32.5px;text-align:center;top:2.02px;font-size:8.6px;letter-spacing:-1.45px;text-indent:0.75px;color:#dcdcdc;transform:scaleX(0.86)">029</div>
<div class="t" style="left:408.88px;width:32.5px;text-align:center;top:128.12px;font-size:7.3px;color:#d0d0d0;-webkit-text-stroke:0.2px #d0d0d0">0</div>
<div style="left:433.84px;top:0;width:12.5px;height:137.3px;background:#232323;border-radius:2px 2px 0 0"></div>
<div style="left:434.84px;top:12.5px;width:10.5px;height:0.9px;background:#191919"></div>
<div style="left:434.84px;top:124.5px;width:10.5px;height:0.9px;background:#191919"></div>
<div class="t" style="left:423.84px;width:32.5px;text-align:center;top:2.02px;font-size:8.6px;letter-spacing:-1.45px;text-indent:0.75px;color:#dcdcdc;transform:scaleX(0.86)">030</div>
<div class="t" style="left:423.84px;width:32.5px;text-align:center;top:128.12px;font-size:7.3px;color:#d0d0d0;-webkit-text-stroke:0.2px #d0d0d0">0</div>
<div style="left:448.80px;top:0;width:12.5px;height:137.3px;background:#232323;border-radius:2px 2px 0 0"></div>
<div style="left:449.80px;top:12.5px;width:10.5px;height:0.9px;background:#191919"></div>
<div style="left:449.80px;top:124.5px;width:10.5px;height:0.9px;background:#191919"></div>
<div class="t" style="left:438.80px;width:32.5px;text-align:center;top:2.02px;font-size:8.6px;letter-spacing:-1.45px;text-indent:0.75px;color:#dcdcdc;transform:scaleX(0.86)">031</div>
<div class="t" style="left:438.80px;width:32.5px;text-align:center;top:128.12px;font-size:7.3px;color:#d0d0d0;-webkit-text-stroke:0.2px #d0d0d0">0</div>
<div style="left:463.76px;top:0;width:12.5px;height:137.3px;background:#232323;border-radius:2px 2px 0 0"></div>
<div style="left:464.76px;top:12.5px;width:10.5px;height:0.9px;background:#191919"></div>
<div style="left:464.76px;top:124.5px;width:10.5px;height:0.9px;background:#191919"></div>
<div class="t" style="left:453.76px;width:32.5px;text-align:center;top:2.02px;font-size:8.6px;letter-spacing:-1.45px;text-indent:0.75px;color:#dcdcdc;transform:scaleX(0.86)">032</div>
<div class="t" style="left:453.76px;width:32.5px;text-align:center;top:128.12px;font-size:7.3px;color:#d0d0d0;-webkit-text-stroke:0.2px #d0d0d0">0</div>
<div style="left:478.72px;top:0;width:12.5px;height:137.3px;background:#232323;border-radius:2px 2px 0 0"></div>
<div style="left:479.72px;top:12.5px;width:10.5px;height:0.9px;background:#191919"></div>
<div style="left:479.72px;top:124.5px;width:10.5px;height:0.9px;background:#191919"></div>
<div class="t" style="left:468.72px;width:32.5px;text-align:center;top:2.02px;font-size:8.6px;letter-spacing:-1.45px;text-indent:0.75px;color:#dcdcdc;transform:scaleX(0.86)">033</div>
<div class="t" style="left:468.72px;width:32.5px;text-align:center;top:128.12px;font-size:7.3px;color:#d0d0d0;-webkit-text-stroke:0.2px #d0d0d0">0</div>
<div style="left:493.68px;top:0;width:12.5px;height:137.3px;background:#232323;border-radius:2px 2px 0 0"></div>
<div style="left:494.68px;top:12.5px;width:10.5px;height:0.9px;background:#191919"></div>
<div style="left:494.68px;top:124.5px;width:10.5px;height:0.9px;background:#191919"></div>
<div class="t" style="left:483.68px;width:32.5px;text-align:center;top:2.02px;font-size:8.6px;letter-spacing:-1.45px;text-indent:0.75px;color:#dcdcdc;transform:scaleX(0.86)">034</div>
<div class="t" style="left:483.68px;width:32.5px;text-align:center;top:128.12px;font-size:7.3px;color:#d0d0d0;-webkit-text-stroke:0.2px #d0d0d0">0</div>
<div style="left:508.64px;top:0;width:12.5px;height:137.3px;background:#232323;border-radius:2px 2px 0 0"></div>
<div style="left:509.64px;top:12.5px;width:10.5px;height:0.9px;background:#191919"></div>
<div style="left:509.64px;top:124.5px;width:10.5px;height:0.9px;background:#191919"></div>
<div class="t" style="left:498.64px;width:32.5px;text-align:center;top:2.02px;font-size:8.6px;letter-spacing:-1.45px;text-indent:0.75px;color:#dcdcdc;transform:scaleX(0.86)">035</div>
<div class="t" style="left:498.64px;width:32.5px;text-align:center;top:128.12px;font-size:7.3px;color:#d0d0d0;-webkit-text-stroke:0.2px #d0d0d0">0</div>
<div style="left:523.60px;top:0;width:12.5px;height:137.3px;background:#232323;border-radius:2px 2px 0 0"></div>
<div style="left:524.60px;top:12.5px;width:10.5px;height:0.9px;background:#191919"></div>
<div style="left:524.60px;top:124.5px;width:10.5px;height:0.9px;background:#191919"></div>
<div class="t" style="left:513.60px;width:32.5px;text-align:center;top:2.02px;font-size:8.6px;letter-spacing:-1.45px;text-indent:0.75px;color:#dcdcdc;transform:scaleX(0.86)">036</div>
<div class="t" style="left:513.60px;width:32.5px;text-align:center;top:128.12px;font-size:7.3px;color:#d0d0d0;-webkit-text-stroke:0.2px #d0d0d0">0</div>
<div style="left:538.56px;top:0;width:12.5px;height:137.3px;background:#232323;border-radius:2px 2px 0 0"></div>
<div style="left:539.56px;top:12.5px;width:10.5px;height:0.9px;background:#191919"></div>
<div style="left:539.56px;top:124.5px;width:10.5px;height:0.9px;background:#191919"></div>
<div class="t" style="left:528.56px;width:32.5px;text-align:center;top:2.02px;font-size:8.6px;letter-spacing:-1.45px;text-indent:0.75px;color:#dcdcdc;transform:scaleX(0.86)">037</div>
<div class="t" style="left:528.56px;width:32.5px;text-align:center;top:128.12px;font-size:7.3px;color:#d0d0d0;-webkit-text-stroke:0.2px #d0d0d0">0</div>
<div style="left:553.52px;top:0;width:12.5px;height:137.3px;background:#232323;border-radius:2px 2px 0 0"></div>
<div style="left:554.52px;top:12.5px;width:10.5px;height:0.9px;background:#191919"></div>
<div style="left:554.52px;top:124.5px;width:10.5px;height:0.9px;background:#191919"></div>
<div class="t" style="left:543.52px;width:32.5px;text-align:center;top:2.02px;font-size:8.6px;letter-spacing:-1.45px;text-indent:0.75px;color:#dcdcdc;transform:scaleX(0.86)">038</div>
<div class="t" style="left:543.52px;width:32.5px;text-align:center;top:128.12px;font-size:7.3px;color:#d0d0d0;-webkit-text-stroke:0.2px #d0d0d0">0</div>
<div style="left:568.48px;top:0;width:12.5px;height:137.3px;background:#232323;border-radius:2px 2px 0 0"></div>
<div style="left:569.48px;top:12.5px;width:10.5px;height:0.9px;background:#191919"></div>
<div style="left:569.48px;top:124.5px;width:10.5px;height:0.9px;background:#191919"></div>
<div class="t" style="left:558.48px;width:32.5px;text-align:center;top:2.02px;font-size:8.6px;letter-spacing:-1.45px;text-indent:0.75px;color:#dcdcdc;transform:scaleX(0.86)">039</div>
<div class="t" style="left:558.48px;width:32.5px;text-align:center;top:128.12px;font-size:7.3px;color:#d0d0d0;-webkit-text-stroke:0.2px #d0d0d0">0</div>
<div style="left:583.44px;top:0;width:12.5px;height:137.3px;background:#232323;border-radius:2px 2px 0 0"></div>
<div style="left:584.44px;top:12.5px;width:10.5px;height:0.9px;background:#191919"></div>
<div style="left:584.44px;top:124.5px;width:10.5px;height:0.9px;background:#191919"></div>
<div class="t" style="left:573.44px;width:32.5px;text-align:center;top:2.02px;font-size:8.6px;letter-spacing:-1.45px;text-indent:0.75px;color:#dcdcdc;transform:scaleX(0.86)">040</div>
<div class="t" style="left:573.44px;width:32.5px;text-align:center;top:128.12px;font-size:7.3px;color:#d0d0d0;-webkit-text-stroke:0.2px #d0d0d0">0</div>
<div style="left:598.40px;top:0;width:12.5px;height:137.3px;background:#232323;border-radius:2px 2px 0 0"></div>
<div style="left:599.40px;top:12.5px;width:10.5px;height:0.9px;background:#191919"></div>
<div style="left:599.40px;top:124.5px;width:10.5px;height:0.9px;background:#191919"></div>
<div class="t" style="left:588.40px;width:32.5px;text-align:center;top:2.02px;font-size:8.6px;letter-spacing:-1.45px;text-indent:0.75px;color:#dcdcdc;transform:scaleX(0.86)">041</div>
<div class="t" style="left:588.40px;width:32.5px;text-align:center;top:128.12px;font-size:7.3px;color:#d0d0d0;-webkit-text-stroke:0.2px #d0d0d0">0</div>
<div style="left:613.36px;top:0;width:12.5px;height:137.3px;background:#232323;border-radius:2px 2px 0 0"></div>
<div style="left:614.36px;top:12.5px;width:10.5px;height:0.9px;background:#191919"></div>
<div style="left:614.36px;top:124.5px;width:10.5px;height:0.9px;background:#191919"></div>
<div class="t" style="left:603.36px;width:32.5px;text-align:center;top:2.02px;font-size:8.6px;letter-spacing:-1.45px;text-indent:0.75px;color:#dcdcdc;transform:scaleX(0.86)">042</div>
<div class="t" style="left:603.36px;width:32.5px;text-align:center;top:128.12px;font-size:7.3px;color:#d0d0d0;-webkit-text-stroke:0.2px #d0d0d0">0</div>
<div style="left:628.32px;top:0;width:12.5px;height:137.3px;background:#232323;border-radius:2px 2px 0 0"></div>
<div style="left:629.32px;top:12.5px;width:10.5px;height:0.9px;background:#191919"></div>
<div style="left:629.32px;top:124.5px;width:10.5px;height:0.9px;background:#191919"></div>
<div class="t" style="left:618.32px;width:32.5px;text-align:center;top:2.02px;font-size:8.6px;letter-spacing:-1.45px;text-indent:0.75px;color:#dcdcdc;transform:scaleX(0.86)">043</div>
<div class="t" style="left:618.32px;width:32.5px;text-align:center;top:128.12px;font-size:7.3px;color:#d0d0d0;-webkit-text-stroke:0.2px #d0d0d0">0</div>
<div style="left:643.28px;top:0;width:12.5px;height:137.3px;background:#232323;border-radius:2px 2px 0 0"></div>
<div style="left:644.28px;top:12.5px;width:10.5px;height:0.9px;background:#191919"></div>
<div style="left:644.28px;top:124.5px;width:10.5px;height:0.9px;background:#191919"></div>
<div class="t" style="left:633.28px;width:32.5px;text-align:center;top:2.02px;font-size:8.6px;letter-spacing:-1.45px;text-indent:0.75px;color:#dcdcdc;transform:scaleX(0.86)">044</div>
<div class="t" style="left:633.28px;width:32.5px;text-align:center;top:128.12px;font-size:7.3px;color:#d0d0d0;-webkit-text-stroke:0.2px #d0d0d0">0</div>
<div style="left:658.24px;top:0;width:12.5px;height:137.3px;background:#232323;border-radius:2px 2px 0 0"></div>
<div style="left:659.24px;top:12.5px;width:10.5px;height:0.9px;background:#191919"></div>
<div style="left:659.24px;top:124.5px;width:10.5px;height:0.9px;background:#191919"></div>
<div class="t" style="left:648.24px;width:32.5px;text-align:center;top:2.02px;font-size:8.6px;letter-spacing:-1.45px;text-indent:0.75px;color:#dcdcdc;transform:scaleX(0.86)">045</div>
<div class="t" style="left:648.24px;width:32.5px;text-align:center;top:128.12px;font-size:7.3px;color:#d0d0d0;-webkit-text-stroke:0.2px #d0d0d0">0</div>
<div style="left:673.20px;top:0;width:12.5px;height:137.3px;background:#232323;border-radius:2px 2px 0 0"></div>
<div style="left:674.20px;top:12.5px;width:10.5px;height:0.9px;background:#191919"></div>
<div style="left:674.20px;top:124.5px;width:10.5px;height:0.9px;background:#191919"></div>
<div class="t" style="left:663.20px;width:32.5px;text-align:center;top:2.02px;font-size:8.6px;letter-spacing:-1.45px;text-indent:0.75px;color:#dcdcdc;transform:scaleX(0.86)">046</div>
<div class="t" style="left:663.20px;width:32.5px;text-align:center;top:128.12px;font-size:7.3px;color:#d0d0d0;-webkit-text-stroke:0.2px #d0d0d0">0</div>
<div style="left:688.16px;top:0;width:12.5px;height:137.3px;background:#232323;border-radius:2px 2px 0 0"></div>
<div style="left:689.16px;top:12.5px;width:10.5px;height:0.9px;background:#191919"></div>
<div style="left:689.16px;top:124.5px;width:10.5px;height:0.9px;background:#191919"></div>
<div class="t" style="left:678.16px;width:32.5px;text-align:center;top:2.02px;font-size:8.6px;letter-spacing:-1.45px;text-indent:0.75px;color:#dcdcdc;transform:scaleX(0.86)">047</div>
<div class="t" style="left:678.16px;width:32.5px;text-align:center;top:128.12px;font-size:7.3px;color:#d0d0d0;-webkit-text-stroke:0.2px #d0d0d0">0</div>
<div style="left:703.12px;top:0;width:12.5px;height:137.3px;background:#232323;border-radius:2px 2px 0 0"></div>
<div style="left:704.12px;top:12.5px;width:10.5px;height:0.9px;background:#191919"></div>
<div style="left:704.12px;top:124.5px;width:10.5px;height:0.9px;background:#191919"></div>
<div class="t" style="left:693.12px;width:32.5px;text-align:center;top:2.02px;font-size:8.6px;letter-spacing:-1.45px;text-indent:0.75px;color:#dcdcdc;transform:scaleX(0.86)">048</div>
<div class="t" style="left:693.12px;width:32.5px;text-align:center;top:128.12px;font-size:7.3px;color:#d0d0d0;-webkit-text-stroke:0.2px #d0d0d0">0</div>
<div style="left:718.08px;top:0;width:12.5px;height:137.3px;background:#232323;border-radius:2px 2px 0 0"></div>
<div style="left:719.08px;top:12.5px;width:10.5px;height:0.9px;background:#191919"></div>
<div style="left:719.08px;top:124.5px;width:10.5px;height:0.9px;background:#191919"></div>
<div class="t" style="left:708.08px;width:32.5px;text-align:center;top:2.02px;font-size:8.6px;letter-spacing:-1.45px;text-indent:0.75px;color:#dcdcdc;transform:scaleX(0.86)">049</div>
<div class="t" style="left:708.08px;width:32.5px;text-align:center;top:128.12px;font-size:7.3px;color:#d0d0d0;-webkit-text-stroke:0.2px #d0d0d0">0</div>
</div>
</body></html>
